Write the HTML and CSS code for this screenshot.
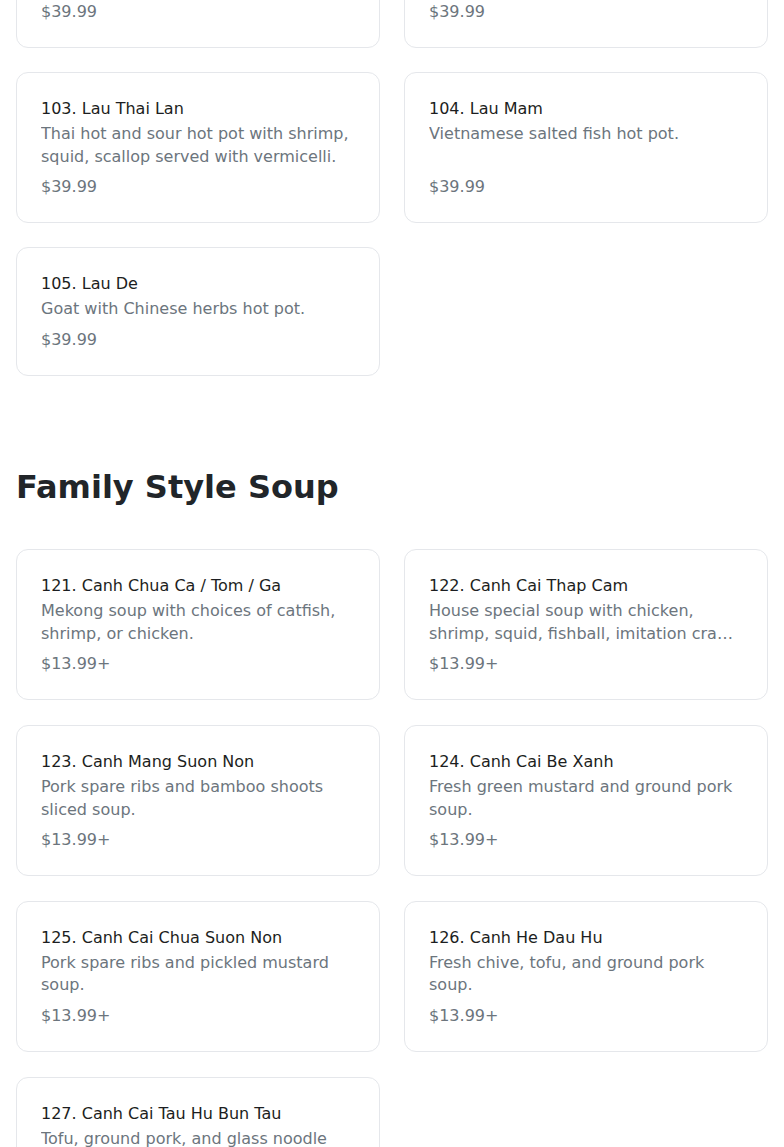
FILE: index.html
```html
<!DOCTYPE html>
<html lang="en">
<head>
<meta charset="utf-8">
<title>Menu</title>
<link rel="stylesheet" href="styles.css">
</head>
<body>
<main class="page">
  <section class="section section-first">
    <div class="grid">
      <div class="card">
        <div class="title">101. Lau Hai San</div>
        <div class="desc">Seafood hot pot with shrimp, squid, scallop, and fish fillet.</div>
        <div class="price">$39.99</div>
      </div>
      <div class="card">
        <div class="title">102. Lau Ca</div>
        <div class="desc">Fish hot pot with vegetables and vermicelli.</div>
        <div class="price">$39.99</div>
      </div>
      <div class="card">
        <div class="title">103. Lau Thai Lan</div>
        <div class="desc">Thai hot and sour hot pot with shrimp, squid, scallop served with vermicelli.</div>
        <div class="price">$39.99</div>
      </div>
      <div class="card">
        <div class="title">104. Lau Mam</div>
        <div class="desc">Vietnamese salted fish hot pot.</div>
        <div class="price">$39.99</div>
      </div>
      <div class="card">
        <div class="title">105. Lau De</div>
        <div class="desc">Goat with Chinese herbs hot pot.</div>
        <div class="price">$39.99</div>
      </div>
    </div>
  </section>

  <section class="section">
    <h2 class="section-title">Family Style Soup</h2>
    <div class="grid grid-soup">
      <div class="card">
        <div class="title">121. Canh Chua Ca / Tom / Ga</div>
        <div class="desc">Mekong soup with choices of catfish, shrimp, or chicken.</div>
        <div class="price">$13.99+</div>
      </div>
      <div class="card">
        <div class="title">122. Canh Cai Thap Cam</div>
        <div class="desc">House special soup with chicken, shrimp, squid, fishball, imitation crab, and vegetables.</div>
        <div class="price">$13.99+</div>
      </div>
      <div class="card">
        <div class="title">123. Canh Mang Suon Non</div>
        <div class="desc">Pork spare ribs and bamboo shoots sliced soup.</div>
        <div class="price">$13.99+</div>
      </div>
      <div class="card">
        <div class="title">124. Canh Cai Be Xanh</div>
        <div class="desc">Fresh green mustard and ground pork soup.</div>
        <div class="price">$13.99+</div>
      </div>
      <div class="card">
        <div class="title">125. Canh Cai Chua Suon Non</div>
        <div class="desc">Pork spare ribs and pickled mustard soup.</div>
        <div class="price">$13.99+</div>
      </div>
      <div class="card">
        <div class="title">126. Canh He Dau Hu</div>
        <div class="desc">Fresh chive, tofu, and ground pork soup.</div>
        <div class="price">$13.99+</div>
      </div>
      <div class="card">
        <div class="title">127. Canh Cai Tau Hu Bun Tau</div>
        <div class="desc">Tofu, ground pork, and glass noodle soup.</div>
        <div class="price">$13.99+</div>
      </div>
    </div>
  </section>
</main>
</body>
</html>
```

FILE: styles.css
```css
html, body {
  margin: 0;
  padding: 0;
  background: #ffffff;
}

body {
  font-family: "DejaVu Sans", "Liberation Sans", sans-serif;
  color: #212529;
  overflow: hidden;
}

.page {
  padding: 0 16px;
}

.section-first {
  margin-top: -103px;
}

.section {
  margin-bottom: 91px;
}

.section-title {
  margin: 0 0 42px;
  font-size: 32px;
  line-height: 40px;
  font-weight: 700;
  color: #212529;
}

.grid {
  display: grid;
  grid-template-columns: 1fr 1fr;
  gap: 24px;
}

.grid-soup {
  row-gap: 24.7px;
}

.card {
  display: flex;
  flex-direction: column;
  border: 1px solid #e5e7eb;
  border-radius: 12px;
  padding: 24px;
  background: #ffffff;
}

.title {
  font-size: 16px;
  line-height: 23px;
  color: #1c1e21;
}

.desc {
  margin-top: 3px;
  margin-bottom: 8px;
  font-size: 16px;
  line-height: 22.4px;
  color: #6c757d;
  display: -webkit-box;
  -webkit-line-clamp: 2;
  -webkit-box-orient: vertical;
  overflow: hidden;
}

.price {
  margin-top: auto;
  font-size: 16px;
  line-height: 22.4px;
  color: #6c757d;
}
```
